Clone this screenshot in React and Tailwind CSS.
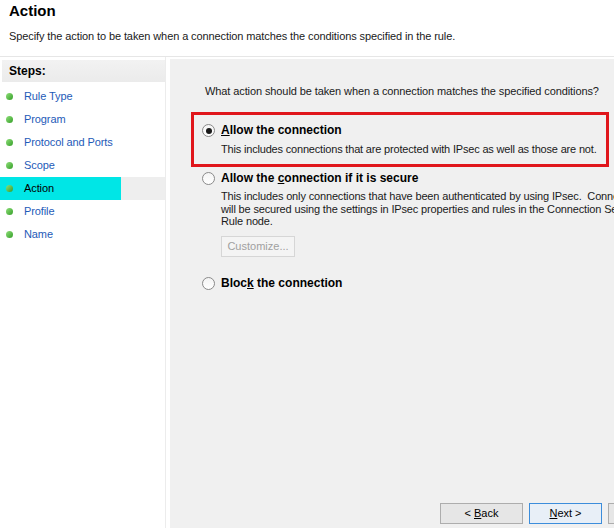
import React from 'react';

const STEPS = ['Rule Type', 'Program', 'Protocol and Ports', 'Scope', 'Action', 'Profile', 'Name'];

function Radio({ checked }) {
  return (
    <span className="relative flex h-[13px] w-[13px] shrink-0 items-center justify-center rounded-full border border-[#8a8a8a] bg-gradient-to-b from-[#f4f4f4] to-[#ffffff]">
      {checked && <span className="h-[6px] w-[6px] rounded-full bg-[#1a1a1a]" />}
    </span>
  );
}

function Option({ checked, label, children, className = '' }) {
  return (
    <div className={`flex gap-[6px] ${className}`}>
      <div className="pt-[1px]">
        <Radio checked={checked} />
      </div>
      <div>
        <p className="text-[12px] font-bold leading-[15px] text-black">{label}</p>
        {children}
      </div>
    </div>
  );
}

function StepItem({ name, active }) {
  return (
    <div className={`flex h-[23px] items-center ${active ? 'bg-[#eeeeee]' : ''}`}>
      <div className={`flex h-full items-center gap-[11px] pl-[6px] ${active ? 'w-[121px] bg-[#00e6e6]' : ''}`}>
        <span className="h-[7px] w-[7px] rounded-full bg-gradient-to-br from-[#8fe07a] to-[#2f9e22]" />
        <span className={`text-[11px] tracking-[-0.1px] ${active ? 'text-black' : 'text-[#1e5bb8]'}`}>{name}</span>
      </div>
    </div>
  );
}

function WizButton({ children, primary, disabled, className = '' }) {
  return (
    <button
      className={`h-[21px] shrink-0 border text-[11px] ${
        primary
          ? 'border-[#3c8ddb] bg-[#e8eff7]'
          : disabled
          ? 'border-[#d6d6d6] bg-[#f4f4f4] text-[#a0a0a0]'
          : 'border-[#adadad] bg-[#e6e6e6]'
      } ${className}`}
    >
      {children}
    </button>
  );
}

export default function App() {
  return (
    <div
      className="flex h-[528px] w-[614px] flex-col overflow-hidden bg-white text-black"
      style={{ fontFamily: '"Liberation Sans", Arial, sans-serif' }}
    >
      {/* Header */}
      <div className="h-[57px] shrink-0 border-b border-[#e6e6e6] pl-[9px] pt-[2px]">
        <h1 className="text-[15px] font-bold leading-[18px]">Action</h1>
        <p className="mt-[9px] text-[11px] leading-[15px] tracking-[-0.1px] text-[#1a1a1a]">
          Specify the action to be taken when a connection matches the conditions specified in the rule.
        </p>
      </div>

      <div className="flex flex-1">
        {/* Steps */}
        <div className="w-[166px] shrink-0 border-r border-[#ececec] bg-white pt-[3px]">
          <div className="ml-[2px] flex h-[22px] items-center bg-gradient-to-b from-[#f2f2f2] to-[#ebebeb] pl-[7px]">
            <span className="text-[12px] font-bold">Steps:</span>
          </div>
          <div className="mt-[3px]">
            {STEPS.map((s) => (
              <StepItem key={s} name={s} active={s === 'Action'} />
            ))}
          </div>
        </div>

        {/* Content */}
        <div className="ml-[4px] mt-[2px] flex min-w-0 flex-1 flex-col overflow-hidden bg-[#f0f0f0]">
          <div className="flex-1 pl-[21px] pt-[25px]">
            <p className="whitespace-nowrap pl-[14px] text-[11px] leading-[15px] tracking-[-0.1px] text-[#1a1a1a]">
              What action should be taken when a connection matches the specified conditions?
            </p>

            <div className="mt-[13px] w-[418px] border-[3px] border-[#e0161b] pb-[7px] pl-[8px] pt-[8px]">
              <Option checked label={<><span className="underline">A</span>llow the connection</>}>
                <p className="mt-[4px] whitespace-nowrap text-[11px] leading-[15px] tracking-[-0.18px] text-[#1a1a1a]">
                  This includes connections that are protected with IPsec as well as those are not.
                </p>
              </Option>
            </div>

            <Option
              className="ml-[11px] mt-[4px]"
              label={<>Allow the <span className="underline">c</span>onnection if it is secure</>}
            >
              <p className="mt-[4px] whitespace-nowrap text-[11px] leading-[12.5px] tracking-[-0.15px] text-[#1a1a1a]">
                This includes only connections that have been authenticated by using IPsec.&nbsp; Connections
                <br />
                will be secured using the settings in IPsec properties and rules in the Connection Security
                <br />
                Rule node.
              </p>
              <WizButton disabled className="mt-[8px] w-[74px]">
                Customize...
              </WizButton>
            </Option>

            <Option
              className="ml-[11px] mt-[19px]"
              label={<>Bloc<span className="underline">k</span> the connection</>}
            />
          </div>

          <div className="flex gap-[6px] pb-[4px] pl-[270px]">
            <WizButton className="w-[83px]">
              &lt; <span className="underline">B</span>ack
            </WizButton>
            <WizButton primary className="w-[73px]">
              <span className="underline">N</span>ext &gt;
            </WizButton>
            <WizButton className="w-[73px]">Cancel</WizButton>
          </div>
        </div>
      </div>
    </div>
  );
}
